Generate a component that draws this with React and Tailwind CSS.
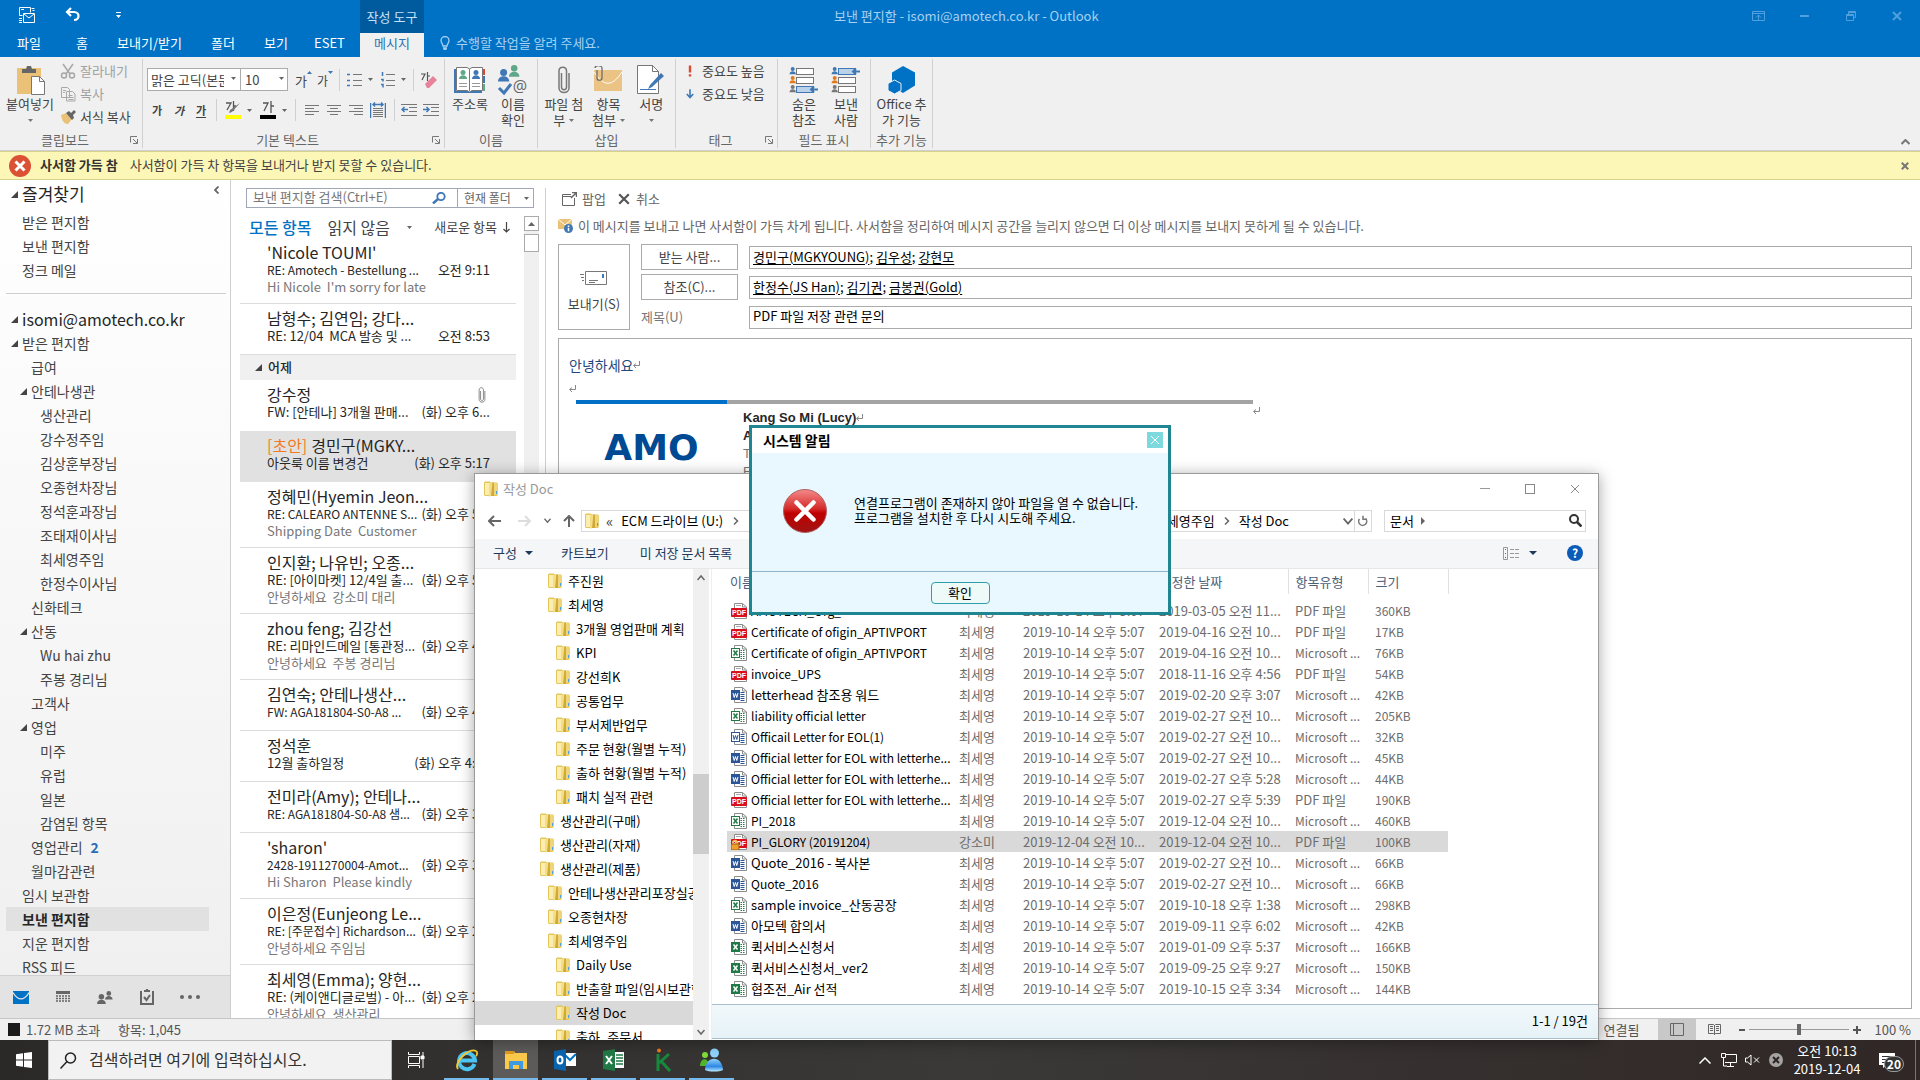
import React from "react";

/* ---------- small shared pieces ---------- */

const Caret = ({ className = "text-[#666]" }) => (
  <svg viewBox="0 0 7 4" className={"h-[3px] w-[5px] shrink-0 " + className} aria-hidden="true">
    <path d="M0 0h7L3.500 4z" fill="currentColor" />
  </svg>
);

const BigCaret = () => (
  <svg viewBox="0 0 8 4" className="h-1 w-2 shrink-0 text-[#1e395b]" aria-hidden="true">
    <path d="M0 0h8L4 4z" fill="currentColor" />
  </svg>
);

const Expand = () => (
  <svg viewBox="0 0 7 7" className="h-[7px] w-[7px] shrink-0" aria-hidden="true">
    <path d="M7 0v7H0z" fill="#444" />
  </svg>
);

const Launcher = () => (
  <button aria-label="대화 상자 표시" className="flex h-2 w-2 items-center">
    <svg viewBox="0 0 8 8" className="h-2 w-2" fill="none" stroke="#777">
      <path d="M.5 6.500V.5H7M3 3l4 4M7.500 3v4.500H3" />
    </svg>
  </button>
);

const Folder = () => (
  <svg viewBox="0 0 14 16" className="h-4 w-[14px] shrink-0" aria-hidden="true">
    <path d="M0 1.500 1 .5h5l.5 1H13l.8 1V14l-1 1H1L0 14z" fill="#e3c65a" />
    <path d="M1 2h5v12H1z" fill="#fbeeb0" />
    <path d="M5 3.500 8.500 1v13L5 16z" fill="#f5dd84" />
    <path d="M8.500 1 10 2v13H7z" fill="#cfa93a" />
    <path d="M10 2h3v12h-3z" fill="#f0d678" />
    <path d="M12 10h1v3h-1z" fill="#4ba3d8" />
  </svg>
);

const Page = ({ children }) => (
  <svg viewBox="0 0 16 16" className="h-4 w-4 shrink-0" aria-hidden="true">
    <path d="M3.500.5h8l4 3.500v11.500h-12z" fill="#fff" stroke="#8c8c8c" />
    <path d="M11.500.5V4h4" fill="none" stroke="#8c8c8c" />
    {children}
  </svg>
);

const FileIcon = ({ kind }) => {
  if (kind === "pdf" || kind === "lock")
    return (
      <Page>
        <path d="M5 2.500h5" stroke="#aaa" />
        <rect x="0" y="5" width="16" height="9" rx="1" fill="#d9101c" />
        <text x="8" y="12.300" textAnchor="middle" fontSize="7" fontWeight="bold" fill="#fff" fontFamily="Liberation Sans, sans-serif">PDF</text>
        {kind === "lock" && (
          <g>
            <path d="M2 11V8.500a2 2 0 0 1 4 0V11" fill="none" stroke="#f6c04c" strokeWidth="1.500" />
            <rect x="0" y="10" width="8" height="6" fill="#f0a030" stroke="#9a5a10" />
          </g>
        )}
      </Page>
    );
  const green = kind[0] === "x";
  const color = green ? "#1f7a45" : "#2a5699";
  const light = kind[1] === "2";
  return (
    <Page>
      <path d="M9.500 5.500h4M9.500 7.500h4M9.500 9.500h4M9.500 11.500h4M9.500 13.500h4" stroke={color} strokeDasharray={green ? "1.500 1" : "none"} />
      <rect x=".5" y="3.500" width="8" height="9" fill={light ? "#fff" : color} stroke={color} />
      <path
        d={green ? "M2.500 5.500l4 5M6.500 5.500l-4 5" : "M2 6l1.200 4.500L4.500 6.500l1.300 4L7 6"}
        fill="none"
        stroke={light ? color : "#fff"}
        strokeWidth={green ? "1.500" : "1"}
      />
    </Page>
  );
};

const X = ({ className }) => (
  <svg viewBox="0 0 10 10" className={className} fill="none" stroke="currentColor" aria-hidden="true">
    <path d="M1 1l8 8M9 1L1 9" />
  </svg>
);

const isLatin = (t) => /^[\x20-\x7e\u00a0]*$/.test(t);

/* ---------- title bar ---------- */

const TitleBar = () => (
  <header className="shrink-0 bg-[#0072c6] text-white">
    <div className="flex h-[33px] text-[13px] leading-4">
      <div className="flex w-[360px] items-start pt-[7px]">
        <button aria-label="모든 폴더 보내기/받기" className="ml-[19px] h-4 w-4">
          <svg viewBox="0 0 16 16" className="h-4 w-4" fill="none" stroke="#fff">
            <path d="M.5.500h11v5M.500.500v8h3M2 2.500h3M12.500 1.500h3M13.500 3.500h2M4.500 6.500h11v9h-11zM5 7l5 4 5-4M0 11.500h3M0 13.500h3M0 15.500h3" />
          </svg>
        </button>
        <button aria-label="실행 취소" className="ml-[30px] h-4 w-4">
          <svg viewBox="0 0 16 16" className="h-4 w-4" fill="none" stroke="#fff" strokeWidth="2.200">
            <path d="M6 1 2 5l4 4M2 5h7c6 0 6 8 0 8" />
          </svg>
        </button>
        <button aria-label="빠른 실행 도구 모음 사용자 지정" className="ml-[34px] h-4 w-[7px]">
          <svg viewBox="0 0 7 16" className="h-4 w-[7px]">
            <path d="M1 5h5v1H1zM1 8h5L3.500 11z" fill="#fff" />
          </svg>
        </button>
      </div>
      <div className="flex w-16 items-center justify-center bg-[#005a9e] text-[#c9e2f5]">작성 도구</div>
      <div className="flex flex-1 items-center pb-[2px] pl-[410px] text-[#a6d1f0]">보낸 편지함 - isomi@amotech.co.kr - Outlook</div>
      <div className="flex items-center pb-[2px] text-[#4fa0dc]">
        <button aria-label="리본 메뉴 표시 옵션" className="mr-[35px]">
          <svg viewBox="0 0 13 10" className="h-[10px] w-[13px]" fill="none" stroke="currentColor">
            <path d="M.5.500h12v9H.5zM1 2.500h11M6.500 9V4M4 6.500l2.500-2.500L9 6.500" />
          </svg>
        </button>
        <button aria-label="최소화" className="mr-[37px] h-0.5 w-[9px] self-center bg-[#4fa0dc]" />
        <button aria-label="이전 크기로" className="mr-9">
          <svg viewBox="0 0 10 10" className="h-[10px] w-[10px]" fill="none" stroke="currentColor">
            <path d="M.5 3.500h7v6h-7zM.5 4.500h7M2.500 3V.5h7v6H8M2.500 1.500h7" />
          </svg>
        </button>
        <button aria-label="닫기" className="mr-[18px]"><X className="h-[10px] w-[10px] stroke-2" /></button>
      </div>
    </div>
    <nav className="flex h-6 text-[13px] leading-5">
      {[
        ["파일", "w-[58px]"],
        ["홈", "w-[48px]"],
        ["보내기/받기", "w-[87px]"],
        ["폴더", "w-[60px]"],
        ["보기", "w-[46px]"],
        ["ESET", "w-[61px]"],
      ].map(([t, w]) => (
        <button key={t} className={"pb-1 text-center " + w}>{t}</button>
      ))}
      <button className="w-16 bg-[#f0f0f0] pb-1 text-[#2a72b5]">메시지</button>
      <button className="flex items-center gap-[6px] pb-1 pl-4 text-[#a6d1f0]">
        <svg viewBox="0 0 10 14" className="h-[14px] w-[10px]" fill="none" stroke="currentColor" strokeWidth="1.300">
          <path d="M3 10C3 8 1 7 1 4.500a4 4 0 0 1 8 0C9 7 7 8 7 10zM3 12h4M3.500 13.500h3" />
        </svg>
        수행할 작업을 알려 주세요.
      </button>
    </nav>
  </header>
);

/* ---------- ribbon ---------- */

const Group = ({ label, launcher, className, children }) => (
  <section className={"mb-[2px] mt-[2px] flex shrink-0 flex-col border-r border-[#d0d0d0] " + className}>
    <div className="flex-1">{children}</div>
    <div className="flex h-4 items-center text-[#666]">
      <span className="flex-1 text-center">{label}</span>
      {launcher && <span className="mr-1"><Launcher /></span>}
    </div>
  </section>
);

const Big = ({ icon, lines, caret, className }) => (
  <button className={"flex flex-col items-center pt-[5px] " + className}>
    <span className="flex h-8 items-center">{icon}</span>
    {lines.map((l, i) => (
      <span key={l} className="flex h-4 items-center gap-1 whitespace-nowrap">
        {l}
        {caret === "inline" && i === lines.length - 1 && <Caret className="text-[#777]" />}
      </span>
    ))}
    {caret === "below" && <span className="flex h-4 items-center"><Caret className="text-[#777]" /></span>}
  </button>
);

const Sep = () => <span className="h-[22px] w-px shrink-0 bg-[#d0d0d0]" />;

const Person = ({ x, y, color, s = 1 }) => (
  <g transform={`translate(${x} ${y}) scale(${s})`} fill={color}>
    <circle cx="4" cy="2.500" r="2.500" />
    <path d="M0 9c0-5 8-5 8 0z" />
  </g>
);

const Lines = ({ d, blue }) => (
  <svg viewBox="0 0 16 16" className="h-4 w-4" fill="none">
    <path d={d} stroke="#777" />
    {blue && <path d={blue} stroke="#3f78b5" strokeWidth="1.500" />}
  </svg>
);

const AddressBook = () => (
  <svg viewBox="0 0 32 28" className="h-7 w-8">
    <path d="M0 3h2v22h26v2H0z" fill="#3f78b5" />
    <path d="M29 3h2v6h-2z" fill="#dc4a2f" /><path d="M29 10h2v7h-2z" fill="#3f78b5" /><path d="M29 18h2v7h-2z" fill="#5fa78a" />
    <path d="M2.500 1.500H13l2.500 1.500L18 1.500h10.500v23H18L15.500 26 13 24.500H2.500zM15.500 3v22" fill="#fff" stroke="#777" />
    <Person x="5" y="4" color="#5fa78a" /><Person x="18" y="4" color="#3f78b5" />
    <path d="M5 17.500h8M5 20.500h8M18 17.500h8M18 20.500h8" stroke="#999" />
  </svg>
);

const CheckNames = () => (
  <svg viewBox="0 0 32 32" className="h-8 w-8">
    <Person x="12" y="1" color="#5fa78a" s={1.3} />
    <Person x="1" y="5" color="#3f78b5" s={1.4} />
    <path d="M2 24l5 5 7-9" fill="none" stroke="#3f78b5" strokeWidth="3" />
    <text x="23" y="28" fontSize="16" textAnchor="middle" fill="#666" fontFamily="Open Sans, sans-serif">@</text>
  </svg>
);

const Clip = ({ className = "h-7 w-3" }) => (
  <svg viewBox="0 0 12 28" className={className} fill="none" stroke="#777" strokeWidth="1.500">
    <path d="M3.500 7v14c0 3.500 5 3.500 5 0V5c0-5-7.500-5-7.500 0v17c0 6 10 6 10 0V7" />
  </svg>
);

const FieldRows = ({ hi }) => (
  <svg viewBox="0 0 30 28" className="h-7 w-[30px]">
    {["#3f78b5", "#e67817", "#777"].map((c, i) => (
      <g key={c}>
        <Person x={0.5} y={1 + i * 9} color={c} s={0.8} />
        <rect x="7.500" y={2.500 + i * 9} width="17" height="6" fill={hi === i ? "#bcd2e8" : "#fff"} stroke={hi === i ? "#3f78b5" : "#777"} />
        {hi === i && <path d={`M29 ${5.500 + i * 9}h-7M25 ${2.500 + i * 9}l-3 3 3 3`} fill="none" stroke="#3f78b5" strokeWidth="2" />}
      </g>
    ))}
  </svg>
);

const Ribbon = () => (
  <div className="flex h-[94px] shrink-0 border-b border-[#d0d0d0] bg-[#f0f0f0] text-[13px] leading-4 text-[#444]">
    <Group label="클립보드" launcher className="w-[143px]">
      <div className="flex">
        <Big
          className="w-[60px]"
          lines={["붙여넣기"]}
          caret="below"
          icon={
            <svg viewBox="0 0 30 30" className="h-[30px] w-[30px]">
              <path d="M2 3h24v26H2z" fill="#ebc077" /><path d="M7 4h4l1-3h4l1 3h4v4H7z" fill="#666" />
              <path d="M16.500 11.500h8l5 5v13h-13z" fill="#fff" stroke="#777" /><path d="M24.500 11.500v5h5" fill="none" stroke="#777" />
            </svg>
          }
        />
        <div className="flex flex-col">
          <button className="flex h-[23px] items-center gap-1 text-[#a0a0a0]">
            <svg viewBox="0 0 16 16" className="h-4 w-4" fill="none" stroke="#a8a8a8" strokeWidth="1.500">
              <path d="M3 1l7 10M13 1L6 11" /><circle cx="4" cy="12.500" r="2.500" /><circle cx="12" cy="12.500" r="2.500" />
            </svg>
            잘라내기
          </button>
          <button className="flex h-[23px] items-center gap-1 text-[#a0a0a0]">
            <svg viewBox="0 0 16 16" className="h-4 w-4" fill="#f0f0f0" stroke="#a8a8a8">
              <path d="M1.500 1.500h6l2 2v8h-8zM6.500 5.500h6l2.500 2.500v7H6.500z" /><path d="M3 4.500h3M3 6.500h2M8.500 9.500h4M8.500 11.500h5M8.500 13.500h5" />
            </svg>
            복사
          </button>
          <button className="flex h-[23px] items-center gap-1 whitespace-nowrap">
            <svg viewBox="0 0 16 16" className="h-4 w-4">
              <path d="M1 6l5-2 6 6-4 5c-4 0-6-3-7-9z" fill="#ebc077" /><path d="M6 4l3-2 2 2 3-3 2 2-3 3 1 3-2 2z" fill="#666" />
            </svg>
            서식 복사
          </button>
        </div>
      </div>
    </Group>

    <Group label="기본 텍스트" launcher className="w-[302px]">
      <div className="flex items-center gap-[7px] pl-1 pt-[9px]">
        <div className="flex">
          <div className="relative">
            <select aria-label="글꼴" className="h-[23px] w-[94px] appearance-none border border-[#ababab] bg-white pl-[3px] pr-4">
              <option>맑은 고딕(본문 한글)</option>
            </select>
            <span className="pointer-events-none absolute right-[5px] top-[9px]"><Caret /></span>
          </div>
          <div className="relative">
            <select aria-label="글꼴 크기" className="h-[23px] w-[47px] appearance-none border border-l-0 border-[#ababab] bg-white pl-1">
              <option>10</option>
            </select>
            <span className="pointer-events-none absolute right-1 top-[9px]"><Caret /></span>
          </div>
        </div>
        <button aria-label="글꼴 크게" className="flex w-[15px] items-start">
          <span className="pt-0.5">가</span>
          <svg viewBox="0 0 5 3" className="h-[3px] w-[5px] shrink-0"><path d="M0 3h5L2.500 0z" fill="#3f78b5" /></svg>
        </button>
        <button aria-label="글꼴 작게" className="flex w-[15px] items-start text-[12px]">
          <span className="pt-0.5">가</span>
          <svg viewBox="0 0 5 3" className="h-[3px] w-[5px] shrink-0"><path d="M0 0h5L2.500 3z" fill="#3f78b5" /></svg>
        </button>
        <Sep />
        <button aria-label="글머리 기호" className="flex items-center gap-[5px]">
          <Lines d="M6 2.500h9M6 8.500h9M6 13.500h9" blue="M0 2.500h3M0 8.500h3M0 13.500h3" /><Caret />
        </button>
        <button aria-label="번호 매기기" className="flex items-center gap-[5px]">
          <Lines d="M6 2.500h9M6 8.500h9M6 13.500h9" blue="M2.500 0v4M1 7.500h2v2M1 12.500h2v3" /><Caret />
        </button>
        <Sep />
        <button aria-label="서식 지우기" className="h-4 w-4">
          <svg viewBox="0 0 16 16" className="h-4 w-4">
            <path d="M0 2h4l-3 6M6.500 0v9M6.500 4H9" fill="none" stroke="#555" strokeWidth="1.200" /><path d="M4 12 12 4l4 4-8 8H6z" fill="#e8829a" />
          </svg>
        </button>
      </div>
      <div className="flex items-center gap-2 pl-[7px] pt-2">
        <button className="w-[14px] text-[11px] font-bold">가</button>
        <button className="w-[14px] text-[11px] font-bold italic">가</button>
        <button className="w-[14px] text-[11px] font-bold underline underline-offset-2">가</button>
        <Sep />
        <button aria-label="텍스트 강조 색" className="flex items-center gap-1.5">
          <svg viewBox="0 0 16 18" className="h-[18px] w-4">
            <path d="M1 2h5l-4 7M8.500 0v10M8.500 5H11" fill="none" stroke="#555" strokeWidth="1.300" /><path d="M15 2 7 11l-3 1 1-3z" fill="#777" /><path d="M0 14h16v4H0z" fill="#ff0" />
          </svg>
          <Caret />
        </button>
        <button aria-label="글꼴 색" className="flex items-center gap-1.5">
          <svg viewBox="0 0 16 18" className="h-[18px] w-4">
            <path d="M3 2h5l-4 8M11 0v12M11 5h3" fill="none" stroke="#555" strokeWidth="1.300" /><path d="M0 14h16v4H0z" fill="#000" />
          </svg>
          <Caret />
        </button>
        <Sep />
        <div className="flex gap-[6px]">
          <button aria-label="왼쪽 맞춤"><Lines d="M1 3.500h14M1 6.500h9M1 9.500h14M1 12.500h9" /></button>
          <button aria-label="가운데 맞춤"><Lines d="M1 3.500h14M4 6.500h8M1 9.500h14M4 12.500h8" /></button>
          <button aria-label="오른쪽 맞춤"><Lines d="M1 3.500h14M6 6.500h9M1 9.500h14M6 12.500h9" /></button>
          <button aria-label="균등 분할"><Lines d="M3 6.500h10M3 8.500h10M3 10.500h10M3 12.500h10M3 14.500h10" blue="M.5 1v15M15.500 1v15M3 2.500h10M5 .5l-2 2 2 2M11 .5l2 2-2 2" /></button>
        </div>
        <div className="flex items-center gap-[6px]">
          <Sep />
          <button aria-label="내어쓰기"><Lines d="M0 2.500h16M8 5.500h8M8 9.500h8M0 13.500h16" blue="M7 7.500H1M3.500 5 1 7.500 3.500 10" /></button>
          <button aria-label="들여쓰기"><Lines d="M0 2.500h16M8 5.500h8M8 9.500h8M0 13.500h16" blue="M0 7.500h6M3.500 5 6 7.500 3.500 10" /></button>
        </div>
      </div>
    </Group>

    <Group label="이름" className="w-[93px]">
      <div className="flex">
        <Big className="w-[50px]" lines={["주소록"]} icon={<AddressBook />} />
        <Big className="w-[36px]" lines={["이름", "확인"]} icon={<CheckNames />} />
      </div>
    </Group>

    <Group label="삽입" className="w-[138px]">
      <div className="flex">
        <Big className="w-[52px]" lines={["파일 첨", "부"]} caret="inline" icon={<Clip />} />
        <Big
          className="w-[38px]"
          lines={["항목", "첨부"]}
          caret="inline"
          icon={
            <svg viewBox="0 0 30 28" className="h-7 w-[30px]">
              <path d="M1 4h28v21H1z" fill="#ebc485" /><path d="M1 6c10 15 18 15 28 0" fill="none" stroke="#fff" />
              <path d="M4 4v8c0 3 5 3 5 0V2c0-3-7-3-7 0" fill="none" stroke="#666" strokeWidth="1.200" />
            </svg>
          }
        />
        <Big
          className="w-[48px]"
          lines={["서명"]}
          caret="below"
          icon={
            <svg viewBox="0 0 28 30" className="h-[30px] w-7">
              <path d="M.5.500h15l6 6v22H.5z" fill="#fff" stroke="#777" /><path d="M15.500.500v6h6" fill="none" stroke="#777" />
              <path d="M3 24.500h16" stroke="#3f78b5" /><path d="M27 11 15 22l-4 2 2-4L24 8z" fill="#3f78b5" />
            </svg>
          }
        />
      </div>
    </Group>

    <Group label="태그" launcher className="w-[102px]">
      <div className="flex flex-col pl-[10px]">
        <button className="flex h-[23px] items-center gap-2 whitespace-nowrap">
          <svg viewBox="0 0 10 14" className="h-[14px] w-2"><path d="M3.500 0h3v9h-3zM3.500 11h3v3h-3z" fill="#dc4a2f" /></svg>
          중요도 높음
        </button>
        <button className="flex h-[23px] items-center gap-2 whitespace-nowrap">
          <svg viewBox="0 0 10 12" className="h-3 w-2" fill="none" stroke="#3f78b5" strokeWidth="2"><path d="M5 0v10M1 6l4 4.500L9 6" /></svg>
          중요도 낮음
        </button>
      </div>
    </Group>

    <Group label="필드 표시" className="w-[93px]">
      <div className="flex pl-[5px]">
        <Big className="w-[42px]" lines={["숨은", "참조"]} icon={<FieldRows hi={2} />} />
        <Big className="w-[42px]" lines={["보낸", "사람"]} icon={<FieldRows hi={0} />} />
      </div>
    </Group>

    <Group label="추가 기능" className="w-[62px]">
      <Big
        className="w-[61px]"
        lines={["Office 추", "가 기능"]}
        icon={
          <svg viewBox="0 0 28 28" className="h-7 w-7">
            <path d="M15 0l12 6.500v13L15 27 4 20V6.500z" fill="#0072c6" /><path d="M6.500 14l6.500 3.500v7L6.500 28 0 24.500v-7z" fill="#0072c6" stroke="#f0f0f0" />
          </svg>
        }
      />
    </Group>
    <div className="flex flex-1 items-end justify-end pb-1 pr-[10px]">
      <button aria-label="리본 메뉴 축소" className="h-2 w-[9px]">
        <svg viewBox="0 0 9 6" className="h-[6px] w-[9px]" fill="none" stroke="#777" strokeWidth="2"><path d="M.5 5l4-4 4 4" /></svg>
      </button>
    </div>
  </div>
);

const WarningBar = () => (
  <div role="alert" className="flex h-[29px] shrink-0 items-center border-y border-[#d6d28e] bg-[#fcf7b6] pl-[9px] text-[13px] leading-4 text-[#444]">
    <svg viewBox="0 0 22 22" className="h-[22px] w-[22px]">
      <circle cx="11" cy="11" r="11" fill="#dc5034" /><path d="M6.500 6.500l9 9M15.500 6.500l-9 9" stroke="#fff" strokeWidth="3" />
    </svg>
    <b className="ml-[9px] pb-px text-[#333]">사서함 가득 참</b>
    <span className="ml-[12px] pb-px">사서함이 가득 차 항목을 보내거나 받지 못할 수 있습니다.</span>
    <button aria-label="알림 닫기" className="ml-auto mr-[11px] text-[#777]"><X className="h-2 w-2 stroke-[2.5]" /></button>
  </div>
);

/* ---------- folder pane ---------- */

const FOLDERS = [
  [1, "받은 편지함", true], [2, "급여"], [2, "안테나생관", true], [3, "생산관리"], [3, "강수정주임"], [3, "김상훈부장님"],
  [3, "오종현차장님"], [3, "정석훈과장님"], [3, "조태재이사님"], [3, "최세영주임"], [3, "한정수이사님"], [2, "신화테크"],
  [2, "산동", true], [3, "Wu hai zhu"], [3, "주봉 경리님"], [2, "고객사"], [2, "영업", true], [3, "미주"], [3, "유럽"],
  [3, "일본"], [3, "감염된 항목"], [2, "영업관리", false, "2"], [2, "월마감관련"], [1, "임시 보관함"], [1, "보낸 편지함", false, null, true],
  [1, "지운 편지함"], [1, "RSS 피드"],
];
const INDENT = { 1: "pl-[5px]", 2: "pl-[14px]", 3: "pl-[23px]" };

const FolderPane = () => (
  <aside className="flex w-[231px] shrink-0 flex-col border-r border-[#d0d0d0] bg-linear-to-b from-white to-[#efefef] text-[14px] text-[#444]">
    <div className="flex min-h-0 flex-1 flex-col overflow-hidden pl-[6px]">
      <div className="flex h-[30px] shrink-0 items-center pb-[2px] pl-[5px] text-[17px] leading-6 text-[#262626]">
        <Expand /><span className="ml-1">즐겨찾기</span>
        <button aria-label="폴더 창 최소화" className="mb-2 ml-auto mr-[11px]">
          <svg viewBox="0 0 5 8" className="h-2 w-[5px]" fill="none" stroke="#666" strokeWidth="1.800"><path d="M4.500.500 1 4l3.500 3.500" /></svg>
        </button>
      </div>
      {["받은 편지함", "보낸 편지함", "정크 메일"].map((t) => (
        <button key={t} className="h-6 shrink-0 pl-4 text-left leading-6">{t}</button>
      ))}
      <hr className="mb-[13px] mr-1 mt-[11px] border-[#d0d0d0]" />
      <div className="flex h-6 shrink-0 items-center pl-[5px] text-[16px] leading-6 text-[#262626]">
        <Expand /><span className="ml-1">isomi@amotech.co.kr</span>
      </div>
      {FOLDERS.map(([lv, t, open, count, sel], i) => (
        <button
          key={i}
          className={"mr-[21px] flex h-6 shrink-0 items-center leading-6 " + INDENT[lv] + (sel ? " bg-[#e1e1e1] font-bold text-[#262626]" : "")}
        >
          <span className="w-[11px] shrink-0">{open && <Expand />}</span>
          {t}
          {count && <b className="ml-2 text-[#2a6cb8]">{count}</b>}
        </button>
      ))}
    </div>
    <nav className="flex h-[43px] shrink-0 items-center border-t border-[#d0d0d0] bg-[#e3e3e3] pl-[13px]">
      <button aria-label="메일" className="mr-[27px]">
        <svg viewBox="0 0 16 13" className="h-[13px] w-4"><path d="M0 0h16v13H0z" fill="#0072c6" /><path d="M0 1.500c5 8.500 11 8.500 16 0" fill="none" stroke="#e3e3e3" strokeWidth="1.200" /></svg>
      </button>
      <button aria-label="일정" className="mr-[27px]">
        <svg viewBox="0 0 14 12" className="h-3 w-[14px]"><path d="M0 0h14v3H0z" fill="#666" /><path d="M0 5h14M0 7.500h14M0 10h14" stroke="#666" strokeWidth="1.500" strokeDasharray="2 1" /></svg>
      </button>
      <button aria-label="연락처" className="mr-[27px]">
        <svg viewBox="0 0 16 13" className="h-[13px] w-4"><Person x="8" y="0" color="#666" s={0.95} /><Person x="0" y="3" color="#666" s={1.1} /></svg>
      </button>
      <button aria-label="작업" className="mr-[26px]">
        <svg viewBox="0 0 14 16" className="h-4 w-[14px]" fill="none" stroke="#666" strokeWidth="2"><path d="M1 2v13h12V2M4 2h6M7 0v3M4 8l2.500 3L10 6" /></svg>
      </button>
      <button aria-label="기타" className="flex gap-1"><i className="h-1 w-1 rounded-full bg-[#666]" /><i className="h-1 w-1 rounded-full bg-[#666]" /><i className="h-1 w-1 rounded-full bg-[#666]" /></button>
    </nav>
  </aside>
);

/* ---------- message list ---------- */

const MAILS = [
  { f: "'Nicole TOUMI'", s: "RE: Amotech - Bestellung ...", t: "오전 9:11", p: "Hi Nicole\u00a0 I'm sorry for late" },
  { f: "남형수; 김연임; 강다...", s: "RE: 12/04\u00a0 MCA 발송 및 ...", t: "오전 8:53" },
  { group: "어제" },
  { f: "강수정", s: "FW: [안테나] 3개월 판매...", t: "(화) 오후 6...", clip: true },
  { f: "경민구(MGKY...", s: "아웃룩 이름 변경건", t: "(화) 오후 5:17", draft: true },
  { f: "정혜민(Hyemin Jeon...", s: "RE: CALEARO ANTENNE S...", t: "(화) 오후 5...", p: "Shipping Date\u00a0 Customer" },
  { f: "인지환; 나유빈; 오종...", s: "RE: [아이마켓] 12/4일 출...", t: "(화) 오후 5...", p: "안녕하세요\u00a0 강소미 대리" },
  { f: "zhou feng; 김강선", s: "RE: 리마인드메일 [통관정...", t: "(화) 오후 4...", p: "안녕하세요\u00a0 주봉 경리님" },
  { f: "김연숙; 안테나생산...", s: "FW: AGA181804-S0-A8 ...", t: "(화) 오후 4..." },
  { f: "정석훈", s: "12월 출하일정", t: "(화) 오후 4:10" },
  { f: "전미라(Amy); 안테나...", s: "RE: AGA181804-S0-A8 샘...", small: true, t: "(화) 오후 3..." },
  { f: "'sharon'", s: "2428-1911270004-Amot...", t: "(화) 오후 3...", p: "Hi Sharon\u00a0 Please kindly" },
  { f: "이은정(Eunjeong Le...", s: "RE: [주문접수] Richardson...", small: true, t: "(화) 오후 2...", p: "안녕하세요 주임님" },
  { f: "최세영(Emma); 양현...", s: "RE: (케이앤디글로벌) - 아...", t: "(화) 오후 2...", p: "안녕하세요\u00a0 생산관리" },
];

const MailItem = ({ m }) => (
  <li
    className={
      "flex shrink-0 flex-col border-b pl-[27px] pr-[26px] pt-[6px] text-[13px] leading-[17px] text-[#262626] " +
      (m.p ? "h-[66px] " : "h-[51px] ") +
      (m.draft ? "border-[#e1e1e1] bg-[#e1e1e1]" : m.clip ? "border-white" : "border-[#dcdcdc]")
    }
  >
    <div className="flex items-center whitespace-nowrap text-[16px]">
      {m.draft && <span className="mr-1 text-[#f37a1f]">[초안]</span>}
      {m.f}
      {m.clip && <Clip className="ml-auto mr-1 h-4 w-2" />}
    </div>
    <div className="flex justify-between whitespace-nowrap">
      <span className={isLatin(m.s) || m.small ? "text-[12px]" : ""}>{m.s}</span>
      <span>{m.t}</span>
    </div>
    {m.p && <div className="whitespace-nowrap text-[#777]">{m.p}</div>}
  </li>
);

const MailList = () => (
  <section className="ml-[5px] mt-2 flex w-[310px] shrink-0 flex-col border-r border-[#d0d0d0] text-[13px] leading-4">
    <div className="ml-[10px] mr-[11px] flex h-5 shrink-0 items-stretch border border-[#a0a8b5] text-[#777]">
      <input aria-label="검색" placeholder="보낸 편지함 검색(Ctrl+E)" className="min-w-0 flex-1 pb-[2px] pl-[6px] placeholder:text-[#777]" />
      <button aria-label="검색 실행" className="mr-[11px] flex items-center">
        <svg viewBox="0 0 14 12" className="h-3 w-[14px]" fill="none" stroke="#3f78b5" strokeWidth="1.800"><circle cx="9" cy="4.500" r="3.700" /><path d="M6 7l-5 4.500" strokeWidth="2.500" /></svg>
      </button>
      <button className="flex w-[76px] items-center justify-between border-l border-[#a0a8b5] pl-[6px] pr-1 text-[12px] text-[#666]">현재 폴더<Caret /></button>
    </div>
    <div className="flex min-h-0 flex-1 pl-1 pt-2">
      <div className="flex w-[276px] shrink-0 flex-col overflow-hidden">
        <div className="flex h-[22px] shrink-0 items-center pl-[9px] text-[#444]">
          <button className="text-[16px] font-medium text-[#0072c6]">모든 항목</button>
          <button className="ml-4 text-[16px]">읽지 않음</button>
          <span className="ml-[17px]"><Caret /></span>
          <button className="ml-auto mr-[6px] flex items-center gap-[6px] whitespace-nowrap">
            새로운 항목
            <svg viewBox="0 0 7 11" className="h-[11px] w-[7px]" fill="none" stroke="#444" strokeWidth="1.200"><path d="M3.500 0v10M.5 7l3 3 3-3" /></svg>
          </button>
        </div>
        <ul className="flex min-h-0 flex-1 flex-col overflow-hidden">
          {MAILS.map((m, i) =>
            m.group ? (
              <li key={i} className="flex h-[25px] shrink-0 items-center gap-[6px] bg-[#f0f0f0] pb-px pl-[15px] text-[#262626]"><Expand /><b className="font-medium">{m.group}</b></li>
            ) : (
              <MailItem key={i} m={m} />
            )
          )}
        </ul>
      </div>
      <div className="ml-2 flex w-[15px] flex-col bg-[#f0f0f0]">
        <button aria-label="위로 스크롤" className="flex h-[15px] items-center justify-center border border-[#ababab] bg-white"><svg viewBox="0 0 7 4" className="h-1 w-[7px]"><path d="M0 4h7L3.500 0z" fill="#666" /></svg></button>
        <span className="mt-[3px] h-[18px] border border-[#ababab] bg-white" />
      </div>
    </div>
  </section>
);

/* ---------- compose pane ---------- */

const Return = () => (
  <svg viewBox="0 0 7 8" className="h-2 w-[7px]" fill="none" stroke="#888" aria-hidden="true"><path d="M6.500 0v4.500H1M3 2.500.500 4.500 3 7" /></svg>
);

const People = ({ label, names }) => (
  <div role="textbox" aria-label={label} className="flex h-[23px] flex-1 items-center border border-[#ababab] pl-[3px] text-black">
    {names.map((n, i) => (
      <span key={n} className="whitespace-pre"><u className="underline-offset-2">{n}</u>{i < names.length - 1 && "; "}</span>
    ))}
  </div>
);

const Compose = () => (
  <main className="ml-3 mr-2 flex min-w-0 flex-1 flex-col text-[13px] leading-4 text-[#666]">
    <div className="flex h-[38px] items-center pl-1">
      <button className="flex items-center gap-[5px]">
        <svg viewBox="0 0 15 14" className="h-[14px] w-[15px]" fill="none" stroke="#666"><path d="M9 2.500H.5v11h12V6M.500 4.500h9" /><path d="M9 6l5-5M10 .5h4.500V5" strokeWidth="1.500" /></svg>
        팝업
      </button>
      <button className="ml-3 flex items-center gap-[6px]"><X className="h-3 w-3 stroke-[1.800] text-[#555]" />취소</button>
    </div>
    <div className="flex h-4 items-center gap-[5px] whitespace-nowrap">
      <svg viewBox="0 0 15 14" className="h-[14px] w-[15px]"><path d="M0 0h14v10H0z" fill="#ebc077" /><path d="M0 0l7 6 7-6" fill="none" stroke="#fff" /><circle cx="10.500" cy="9.500" r="4.500" fill="#3f78b5" /><path d="M10.500 6.500v1.500M10.500 8.700v3.500" stroke="#fff" strokeWidth="1.500" /></svg>
      이 메시지를 보내고 나면 사서함이 가득 차게 됩니다. 사서함을 정리하여 메시지 공간을 늘리지 않으면 더 이상 메시지를 보내지 못하게 될 수 있습니다.
    </div>
    <div className="mt-[10px] flex">
      <button className="flex h-[86px] w-[72px] shrink-0 flex-col items-center border border-[#ababab] pt-[26px]">
        <svg viewBox="0 0 28 15" className="h-[15px] w-7" fill="none" stroke="#777"><path d="M5.500.500h21v13h-21zM9 9.500h9M9 11.500h6M0 3.500h4M1 6.500h3M2 9.500h2" /><path d="M22 3h2v4h-2z" fill="#3f78b5" stroke="none" /></svg>
        <span className="mt-[10px] text-[#444]">보내기(S)</span>
      </button>
      <div className="ml-[11px] flex flex-1 flex-col gap-1">
        <div className="flex items-center gap-[11px]">
          <button className="h-[26px] w-[97px] border border-[#ababab] text-[#444]">받는 사람...</button>
          <People label="받는 사람" names={["경민구(MGKYOUNG)", "김우성", "강현모"]} />
        </div>
        <div className="flex items-center gap-[11px]">
          <button className="h-[26px] w-[97px] border border-[#ababab] text-[#444]">참조(C)...</button>
          <People label="참조" names={["한정수(JS Han)", "김기권", "금봉권(Gold)"]} />
        </div>
        <div className="flex h-[26px] items-center">
          <label htmlFor="subject" className="w-[108px] pb-px text-[#777]">제목(U)</label>
          <input id="subject" defaultValue="PDF 파일 저장 관련 문의" className="h-[23px] min-w-0 flex-1 border border-[#ababab] pb-[3px] pl-[3px] text-black" />
        </div>
      </div>
    </div>
    <article className="mb-[9px] mt-2 min-h-0 flex-1 overflow-hidden border border-[#ababab] pl-[10px] pt-4">
      <p className="flex h-5 items-center text-[14px] text-[#1f497d]">안녕하세요<Return /></p>
      <p className="flex h-7 items-center"><Return /></p>
      <div className="flex">
        <div className="ml-[7px] w-[677px]">
          <div className="mt-[-3px] flex h-1"><span className="w-[151px] bg-[#0070c6]" /><span className="flex-1 bg-[#a3a3a3]" /></div>
          <div className="mt-[5px] flex font-['Liberation_Sans','Noto_Sans_CJK_KR',sans-serif] text-[#262626]">
            <div className="flex w-[167px] flex-col items-center pr-[16px] pt-[21px]">
              <div className="font-['DejaVu_Sans',sans-serif] text-[36px] font-bold leading-9 text-[#004a94]">AMO</div>
              <div className="mt-[5px] flex w-[100px] justify-between text-[14px]">
                {"AMOTECH".split("").map((c) => <span key={c}>{c}</span>)}
              </div>
            </div>
            <div className="leading-[18px]">
              <p className="flex items-center font-bold">Kang So Mi (Lucy)<Return /></p>
              <p className="font-bold">Assistant Manager</p>
              <p className="text-[#777]">Tel.</p>
              <p className="text-[#777]">Fax.</p>
            </div>
          </div>
        </div>
        <span className="mt-1"><Return /></span>
      </div>
    </article>
  </main>
);

/* ---------- file explorer ---------- */

const TREE = [
  [2, "주진원"], [2, "최세영"], [3, "3개월 영업판매 계획"], [3, "KPI"], [3, "강선희K"], [3, "공통업무"], [3, "부서제반업무"],
  [3, "주문 현황(월별 누적)"], [3, "출하 현황(월별 누적)"], [3, "패치 실적 관련"], [1, "생산관리(구매)"], [1, "생산관리(자재)"],
  [1, "생산관리(제품)"], [2, "안테나생산관리포장실공유"], [2, "오종현차장"], [2, "최세영주임"], [3, "Daily Use"],
  [3, "반출할 파일(임시보관함)"], [3, "작성 Doc", true], [3, "출하_주문서"],
];
const TREE_PAD = { 1: "pl-[65px]", 2: "pl-[73px]", 3: "pl-[81px]" };

const C = "2019-10-14 오후 5:07";
const MS = "Microsoft ...";
const PDF = "PDF 파일";
const FILES = [
  ["pdf", "AMOTECH_Org_", "2019-03-05 오전 11...", PDF, "360KB"],
  ["pdf", "Certificate of ofigin_APTIVPORT", "2019-04-16 오전 10...", PDF, "17KB"],
  ["x2", "Certificate of ofigin_APTIVPORT", "2019-04-16 오전 10...", MS, "76KB"],
  ["pdf", "invoice_UPS", "2018-11-16 오후 4:56", PDF, "54KB"],
  ["w1", "letterhead 참조용 워드", "2019-02-20 오후 3:07", MS, "42KB"],
  ["x2", "liability official letter", "2019-02-27 오전 10...", MS, "205KB"],
  ["w2", "Officail Letter for EOL(1)", "2019-02-27 오전 10...", MS, "32KB"],
  ["w1", "Official letter for EOL with letterhe...", "2019-02-27 오전 10...", MS, "45KB"],
  ["w1", "Official letter for EOL with letterhe...", "2019-02-27 오후 5:28", MS, "44KB"],
  ["pdf", "Official letter for EOL with letterhe...", "2019-02-27 오후 5:39", PDF, "190KB"],
  ["x2", "PI_2018", "2019-12-04 오전 10...", MS, "460KB"],
  ["lock", "PI_GLORY (20191204)", "2019-12-04 오전 10...", PDF, "100KB"],
  ["w1", "Quote_2016 - 복사본", "2019-02-27 오전 10...", MS, "66KB"],
  ["w1", "Quote_2016", "2019-02-27 오전 10...", MS, "66KB"],
  ["x2", "sample invoice_산동공장", "2019-10-18 오후 1:38", MS, "298KB"],
  ["w1", "아모텍 합의서", "2019-09-11 오후 6:02", MS, "42KB"],
  ["x1", "퀵서비스신청서", "2019-01-09 오후 5:37", MS, "166KB"],
  ["x1", "퀵서비스신청서_ver2", "2019-09-25 오후 9:27", MS, "150KB"],
  ["x1", "협조전_Air 선적", "2019-10-15 오후 3:34", MS, "144KB"],
];

const Chevron = ({ d, className = "h-2 w-2" }) => (
  <svg viewBox="0 0 8 8" className={className} fill="none" stroke="#666" strokeWidth="1.500" aria-hidden="true"><path d={d} /></svg>
);
const DOWN = "M.5 2 4 6l3.500-4";
const UP = "M.5 6 4 2l3.500 4";
const RIGHT = "M2 .5 5.500 4 2 7.500";

const Explorer = () => (
  <section className="absolute bottom-10 left-[474px] top-[473px] flex w-[1125px] flex-col border border-b-0 border-[#9a9a9a] bg-white text-[13px] leading-4 text-black shadow-[0_2px_14px_rgba(0,0,0,0.35)]">
    <div className="flex h-[29px] shrink-0 items-center pl-[9px] text-[#999]">
      <Folder /><span className="ml-[5px]">작성 Doc</span>
      <div className="ml-auto mr-[18px] flex items-center gap-[35px]">
        <button aria-label="최소화" className="h-px w-[10px] bg-[#999]" />
        <button aria-label="최대화" className="h-[10px] w-[10px] border border-[#888]" />
        <button aria-label="닫기"><X className="h-[10px] w-[10px] text-[#888]" /></button>
      </div>
    </div>
    <div className="flex h-9 shrink-0 items-center pb-px pl-[13px] pr-3">
      <button aria-label="뒤로"><svg viewBox="0 0 13 12" className="h-3 w-[13px]" fill="none" stroke="#666" strokeWidth="2"><path d="M13 6H1M6 1 1 6l5 5" /></svg></button>
      <button aria-label="앞으로" className="ml-[17px]"><svg viewBox="0 0 13 12" className="h-3 w-[13px]" fill="none" stroke="#ddd" strokeWidth="2"><path d="M0 6h12M7 1l5 5-5 5" /></svg></button>
      <button aria-label="최근 위치" className="ml-[13px]"><Chevron d={DOWN} className="h-[7px] w-[7px]" /></button>
      <button aria-label="위로" className="ml-3"><svg viewBox="0 0 12 12" className="h-3 w-3" fill="none" stroke="#666" strokeWidth="2"><path d="M6 12V1M1 6l5-5 5 5" /></svg></button>
      <div className="ml-[6px] flex h-[22px] flex-1 items-center border border-[#d9d9d9] pl-[3px]">
        <Folder /><span className="ml-[7px] text-[15px] text-[#444]">«</span>
        <span className="ml-2">ECM 드라이브 (U:)</span><span className="mx-[9px]"><Chevron d={RIGHT} /></span><span>AMO</span>
        <span className="ml-auto">최세영주임</span><span className="mx-2"><Chevron d={RIGHT} /></span><span>작성 Doc</span>
        <button aria-label="이전 위치" className="ml-[54px] mr-px"><Chevron d={DOWN} className="h-[10px] w-[10px]" /></button>
        <button aria-label="새로 고침" className="flex h-full w-[17px] items-center justify-center border-l border-[#d9d9d9]">
          <svg viewBox="0 0 10 12" className="h-3 w-[10px]" fill="none" stroke="#777" strokeWidth="1.500"><path d="M1.500 4a4 4 0 1 0 6-.5M5 .8v3.400h4" /></svg>
        </button>
      </div>
      <div className="ml-3 flex h-[22px] w-[202px] items-center border border-[#d9d9d9] pl-[5px] pr-[3px]">
        <span>문서</span>
        <svg viewBox="0 0 4 8" className="ml-[7px] h-2 w-1"><path d="M0 0v8l4-4z" fill="#666" /></svg>
        <input aria-label="문서 검색" className="min-w-0 flex-1" />
        <button aria-label="검색"><svg viewBox="0 0 13 13" className="h-[13px] w-[13px]" fill="none" stroke="#333" strokeWidth="2"><circle cx="5" cy="5" r="4" /><path d="M8 8l4.500 4.500" strokeWidth="2.500" /></svg></button>
      </div>
    </div>
    <div className="flex h-[30px] shrink-0 items-center border-b border-[#e5e7e9] bg-[#f5f6f7] pb-px pl-[18px] text-[#1e395b]">
      <button className="flex items-center gap-2">구성<BigCaret /></button>
      <button className="ml-7">카트보기</button>
      <button className="ml-[31px]">미 저장 문서 목록</button>
      <button aria-label="보기 변경" className="ml-auto flex items-center gap-[10px]">
        <svg viewBox="0 0 16 13" className="h-[13px] w-4" fill="none" stroke="#999"><path d="M.5.500h4v12h-4zM7 2.500h4M12 2.500h4M7 6.500h4M12 6.500h4M7 10.500h4M12 10.500h4" /><path d="M2 2.500h1M2 6.500h1" stroke="#3f78b5" /><path d="M2 10.500h1" stroke="#c33" /></svg>
        <BigCaret />
      </button>
      <button aria-label="도움말" className="ml-[30px] mr-[15px] flex h-4 w-4 items-center justify-center rounded-full bg-[#0a5cb8] text-[12px] font-bold text-white">?</button>
    </div>
    <div className="flex min-h-0 flex-1">
      <ul className="flex w-[218px] shrink-0 flex-col overflow-hidden">
        {TREE.map(([lv, t, sel], i) => (
          <li key={i} className={"flex h-6 w-full shrink-0 items-center gap-[6px] overflow-hidden whitespace-nowrap " + TREE_PAD[lv] + (sel ? " bg-[#d9d9d9]" : "")}><Folder />{t}</li>
        ))}
      </ul>
      <div className="flex w-4 shrink-0 flex-col items-center bg-[#f0f0f0] pb-1 pt-[5px]">
        <Chevron d={UP} />
        <span className="mt-[192px] h-20 w-4 bg-[#cdcdcd]" />
        <span className="mt-auto"><Chevron d={DOWN} /></span>
      </div>
      <div className="ml-[2px] flex min-w-0 flex-1 flex-col border-l border-[#eee]">
        <div className="min-h-0 flex-1 pl-[15px]">
          <table className="w-[721px] table-fixed border-collapse whitespace-nowrap text-left text-[#6d6d6d]">
            <colgroup>
              <col className="w-[225px]" /><col className="w-[64px]" /><col className="w-[136px]" /><col className="w-[136px]" /><col className="w-[80px]" /><col className="w-[80px]" />
            </colgroup>
            <thead>
              <tr className="h-[25px] text-[#4c607a]">
                {["이름", "등록자", "만든 날짜", "수정한 날짜", "항목유형", "크기"].map((h, i) => (
                  <th key={h} scope="col" className={"border-r border-[#e0e0e0] font-normal " + (i ? "pl-[7px]" : "pl-[3px]")}>{h}</th>
                ))}
              </tr>
              <tr className="h-[6px]"><td colSpan={6} /></tr>
            </thead>
            <tbody>
              {FILES.map(([k, n, d, t, s], i) => (
                <tr key={i} className={"h-[21px] " + (k === "lock" ? "bg-[#d9d9d9]" : "")}>
                  <td className="p-0 pl-1 text-black">
                    <span className="flex items-center gap-1">
                      <FileIcon kind={k} />
                      <span className={isLatin(n) ? "text-[12px]" : ""}>{n}</span>
                    </span>
                  </td>
                  <td className="p-0 pl-[7px]">{k === "lock" ? "강소미" : "최세영"}</td>
                  <td className="p-0 pl-[7px]">{k === "lock" ? "2019-12-04 오전 10..." : C}</td>
                  <td className="p-0 pl-[7px]">{d}</td>
                  <td className={"p-0 pl-[7px] " + (isLatin(t) ? "text-[12px]" : "")}>{t}</td>
                  <td className="p-0 pl-[7px] text-[12px]">{s}</td>
                </tr>
              ))}
            </tbody>
          </table>
        </div>
        <footer className="mb-px flex h-[35px] shrink-0 items-center justify-end border-y border-[#a9bfcc] bg-linear-to-b from-[#f1f8fb] to-[#e6f2f7] pb-px pr-[10px]">1-1 / 19건</footer>
      </div>
    </div>
  </section>
);

const Dialog = () => (
  <section role="alertdialog" aria-label="시스템 알림" className="absolute left-[749px] top-[425px] flex w-[422px] flex-col border-[3px] border-[#1f8591] bg-[#e9f8ff] text-[13px] leading-[15px] text-black">
    <header className="flex h-[25px] items-center bg-white pb-px pl-[11px] pr-[5px] text-[14px] font-bold">
      시스템 알림
      <button aria-label="닫기" className="ml-auto flex h-4 w-4 items-center justify-center bg-[#7ed9de] text-white"><X className="h-[10px] w-[10px]" /></button>
    </header>
    <div className="flex h-[118px] pl-[31px] pt-9">
      <svg viewBox="0 0 44 44" className="h-11 w-11 shrink-0">
        <defs><linearGradient id="ball" x1="0" y1="0" x2="0" y2="1"><stop offset="0" stopColor="#f58a8a" /><stop offset=".45" stopColor="#d42a2a" /><stop offset=".55" stopColor="#c00000" /><stop offset="1" stopColor="#a01414" /></linearGradient></defs>
        <circle cx="22" cy="22" r="21.500" fill="url(#ball)" stroke="#b06060" />
        <path d="M13.500 13.500l17 17M30.500 13.500l-17 17" stroke="#fff" strokeWidth="4.500" strokeLinecap="round" />
      </svg>
      <p className="ml-[27px] mt-[6px] whitespace-nowrap">연결프로그램이 존재하지 않아 파일을 열 수 없습니다.<br />프로그램을 설치한 후 다시 시도해 주세요.</p>
    </div>
    <div className="flex h-[41px] items-start justify-center border-t border-[#8fb4cc] pt-[10px]">
      <button className="h-[22px] w-[59px] rounded-sm border border-[#2f9eab] bg-[#eefaf8] pb-px">확인</button>
    </div>
  </section>
);

/* ---------- status bar and task bar ---------- */

const StatusBar = () => (
  <div className="flex h-[22px] shrink-0 items-center border-t border-[#c6c6c6] bg-[#f0f0f0] pl-2 text-[13px] leading-4 text-[#555]">
    <span className="h-[13px] w-3 bg-[#1a1a1a]" />
    <span className="ml-[6px]">1.72 MB 초과</span>
    <span className="ml-[18px]">항목: 1,045</span>
    <span className="ml-auto">연결됨</span>
    <button aria-label="기본 보기" className="ml-[19px] flex h-full w-[38px] items-center justify-center bg-[#c8c8c8]">
      <svg viewBox="0 0 14 13" className="h-[13px] w-[14px]" fill="none" stroke="#666"><path d="M.5.500h13v12H.5zM3.500.500v12" /></svg>
    </button>
    <button aria-label="읽기용 보기" className="ml-3">
      <svg viewBox="0 0 13 13" className="h-[13px] w-[13px]" fill="none" stroke="#666"><path d="M.5 1.500h5l1 1 1-1h5v9h-5l-1 1-1-1h-5zM6.500 2v10M2 3.500h3M2 5.500h3M2 7.500h3M8 3.500h3M8 5.500h3M8 7.500h3" /></svg>
    </button>
    <button aria-label="축소" className="ml-[18px] h-0.5 w-[6px] bg-[#555]" />
    <div className="ml-1 flex w-[100px] items-center justify-center">
      <input type="range" aria-label="확대/축소" defaultValue="50" className="h-3 w-[100px] appearance-none bg-transparent [&::-webkit-slider-runnable-track]:h-px [&::-webkit-slider-runnable-track]:bg-[#999] [&::-webkit-slider-thumb]:-mt-[5px] [&::-webkit-slider-thumb]:h-[11px] [&::-webkit-slider-thumb]:w-1 [&::-webkit-slider-thumb]:appearance-none [&::-webkit-slider-thumb]:bg-[#666]" />
    </div>
    <button aria-label="확대" className="ml-1"><svg viewBox="0 0 8 8" className="h-2 w-2" stroke="#555" strokeWidth="2"><path d="M4 0v8M0 4h8" /></svg></button>
    <span className="ml-[13px] mr-[9px]">100 %</span>
  </div>
);

const Task = ({ label, active, children }) => (
  <button aria-label={label} className={"flex h-10 w-[45px] flex-col items-center border-b-2 border-[#76b9ed] pt-2 " + (active ? "bg-[#5c5b5a]" : "")}>{children}</button>
);

const TaskBar = () => (
  <footer className="flex h-10 shrink-0 bg-linear-to-r from-[#2a2928] via-[#3a3938] to-[#302726] text-white">
    <button aria-label="시작" className="flex w-12 items-center justify-center">
      <svg viewBox="0 0 16 16" className="h-4 w-4" fill="#fff"><path d="M0 2.300 7 1.300v6.200H0zM8 1.100 16 0v7.500H8zM0 8.500h7v6.200l-7-1zM8 8.500h8V16l-8-1.100z" /></svg>
    </button>
    <label className="flex w-[344px] items-center border border-[#bbb] bg-[#f2f2f2] pl-[11px]">
      <svg viewBox="0 0 17 17" className="h-[17px] w-[17px] shrink-0" fill="none" stroke="#222" strokeWidth="1.500"><circle cx="10.500" cy="6" r="5" /><path d="M7 9.500.500 16.500" /></svg>
      <input aria-label="검색" placeholder="검색하려면 여기에 입력하십시오." className="ml-3 min-w-0 flex-1 pb-[2px] text-[16px] placeholder:text-[#333]" />
    </label>
    <button aria-label="작업 보기" className="flex w-[48px] items-center justify-center">
      <svg viewBox="0 0 17 16" className="h-4 w-[17px]" fill="none" stroke="#fff"><path d="M.5 0v2.500h11V0M.500 16v-2.500h11V16M.500 4.500h11v7H.5zM15 0v4M15 8v8" /><path d="M13 4h3v3h-3z" fill="#fff" /></svg>
    </button>
    <div className="ml-1 flex gap-1">
      <Task label="Internet Explorer">
        <svg viewBox="0 0 24 24" className="h-6 w-6" fill="none"><path d="M19.500 16a8 8 0 1 1 .5-3.500H6" stroke="#4cc3f1" strokeWidth="4" /><path d="M3 21C-2 15 14-1 21 3c2 1 1 4 0 5" stroke="#f5c931" strokeWidth="1.800" /></svg>
      </Task>
      <Task label="파일 탐색기" active>
        <svg viewBox="0 0 24 24" className="h-6 w-6"><path d="M1 3h9l1 2h12v16H1z" fill="#fbc94b" /><path d="M1 3h9v3H1z" fill="#e09b1c" /><path d="M5 21v-8h14v8h-4v-4H9v4z" fill="#3f9ae0" /></svg>
      </Task>
      <Task label="Outlook">
        <svg viewBox="0 0 24 24" className="h-6 w-6"><path d="M11 5h12v13H11z" fill="#fff" /><path d="M11 6l6 6 6-6" fill="none" stroke="#0072c6" strokeWidth="2" /><path d="M1 3l12-2v22L1 21z" fill="#0a64ad" /><ellipse cx="7" cy="12" rx="2.500" ry="3.500" fill="none" stroke="#fff" strokeWidth="2" /></svg>
      </Task>
      <Task label="Excel">
        <svg viewBox="0 0 24 24" className="h-6 w-6"><path d="M12 4h10v16H12z" fill="#fff" /><path d="M14 7h7M14 10h7M14 13h7M14 16h7" stroke="#1f7a45" strokeWidth="1.500" /><path d="M1 3l12-2v22L1 21z" fill="#1f7a45" /><path d="M4 8l6 8M10 8l-6 8" stroke="#fff" strokeWidth="2" /></svg>
      </Task>
      <Task label="K">
        <svg viewBox="0 0 24 24" className="h-6 w-6" fill="none" stroke="#168a3c" strokeWidth="3"><path d="M7 6v17M18 6 8 15M10 13l9 10" /><circle cx="8" cy="2.500" r="2" fill="#f07a1a" stroke="none" /></svg>
      </Task>
      <Task label="메신저">
        <svg viewBox="0 0 24 24" className="h-6 w-6">
          <defs><linearGradient id="buddy" x1="0" y1="0" x2="0" y2="1"><stop offset="0" stopColor="#8fd4fa" /><stop offset=".6" stopColor="#2f86e6" /><stop offset="1" stopColor="#b5ecff" /></linearGradient></defs>
          <circle cx="5" cy="7" r="3" fill="#7fdc3c" /><path d="M0 18c0-9 9-9 9 0z" fill="#4fb52a" />
          <circle cx="14.500" cy="5" r="4.500" fill="#8fd4fa" /><path d="M5 22c1-15 17-15 18 0-4 2-14 2-18 0z" fill="url(#buddy)" />
        </svg>
      </Task>
    </div>
    <div className="ml-auto flex items-center">
      <button aria-label="숨겨진 아이콘 표시"><svg viewBox="0 0 12 7" className="h-[7px] w-3" fill="none" stroke="#fff" strokeWidth="1.500"><path d="M.5 6.500 6 1l5.500 5.500" /></svg></button>
      <button aria-label="네트워크" className="ml-[10px]"><svg viewBox="0 0 16 14" className="h-[14px] w-4" fill="none" stroke="#fff"><path d="M4 1.500h11.500v8H4M9.500 10v3M6 13.500h7M.500.500h4v4h-4zM2.500 5v8H6" /></svg></button>
      <button aria-label="음소거" className="ml-2"><svg viewBox="0 0 15 12" className="h-3 w-[15px]" fill="none" stroke="#fff"><path d="M.5 4h2L6 1v10L2.500 8h-2zM9 3.500l5 5M14 3.500l-5 5" /></svg></button>
      <button aria-label="연결 안 됨" className="ml-[9px]"><svg viewBox="0 0 14 14" className="h-[14px] w-[14px]"><circle cx="7" cy="7" r="7" fill="#a5a3a2" /><path d="M4 4l6 6M10 4l-6 6" stroke="#2a2524" strokeWidth="2" /></svg></button>
      <div className="ml-[10px] w-[68px] pb-px text-center text-[13px] leading-[18px]">오전 10:13<br />2019-12-04</div>
      <button aria-label="알림 20개" className="relative ml-[18px] mr-[11px] h-6 w-[25px]">
        <svg viewBox="0 0 17 17" className="h-[17px] w-[17px]"><path d="M0 1h16v12H8l-4 3v-3H0z" fill="#fff" /><path d="M3 4.500h10M3 7.500h10M3 10.500h6" stroke="#333" /></svg>
        <span className="absolute bottom-0 right-0 rounded-full border border-[#999] bg-[#333] px-[2px] text-[12px] font-bold leading-[14px]">20</span>
      </button>
      <span className="mr-1 h-10 w-px bg-[#777]" />
    </div>
  </footer>
);

export default function App() {
  return (
    <div className="relative flex h-screen w-full flex-col overflow-hidden bg-white font-['Noto_Sans_CJK_KR',sans-serif]">
      <TitleBar />
      <Ribbon />
      <WarningBar />
      <div className="flex min-h-0 flex-1">
        <FolderPane />
        <MailList />
        <Compose />
      </div>
      <StatusBar />
      <TaskBar />
      <Explorer />
      <Dialog />
    </div>
  );
}
